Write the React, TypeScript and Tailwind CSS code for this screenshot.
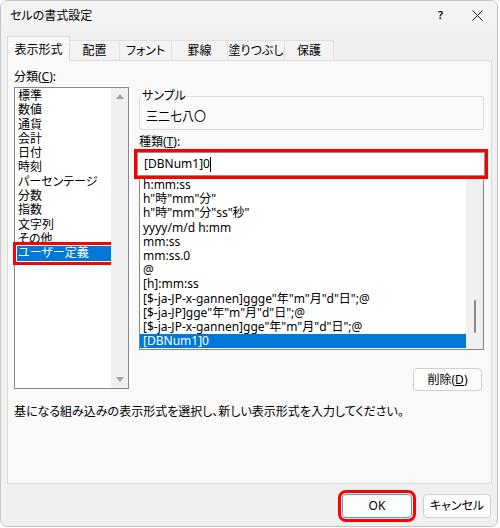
import React from 'react';

const categories = [
  '標準',
  '数値',
  '通貨',
  '会計',
  '日付',
  '時刻',
  'パーセンテージ',
  '分数',
  '指数',
  '文字列',
  'その他',
  'ユーザー定義',
];

const formats = [
  'h:mm:ss',
  'h"時"mm"分"',
  'h"時"mm"分"ss"秒"',
  'yyyy/m/d h:mm',
  'mm:ss',
  'mm:ss.0',
  '@',
  '[h]:mm:ss',
  '[$-ja-JP-x-gannen]ggge"年"m"月"d"日";@',
  '[$-ja-JP]gge"年"m"月"d"日";@',
  '[$-ja-JP-x-gannen]gge"年"m"月"d"日";@',
  '[DBNum1]0',
];

const tabs = [
  { label: '表示形式', w: 'w-[63px]', active: true },
  { label: '配置', w: 'w-[50px]' },
  { label: 'フォント', w: 'w-[52px]' },
  { label: '罫線', w: 'w-[56px]' },
  { label: '塗りつぶし', w: 'w-[57px]' },
  { label: '保護', w: 'w-[49px]' },
];

export default function App() {
  return (
    <div className="w-[500px] h-[528px] bg-white text-black text-[12px] font-['Noto_Sans','Noto_Sans_CJK_JP',sans-serif] [font-feature-settings:'palt']">
      <div className="w-[498px] h-[527px] bg-[#f0f0f0] border border-[#c4c4c4] rounded-[7px] flex flex-col overflow-hidden">
        {/* Title bar */}
        <div className="h-[29px] flex items-center bg-[#f3f3f3]">
          <span className="pl-[9px] leading-[14px]">セルの書式設定</span>
          <span className="ml-auto mr-[29px] font-semibold text-[11px]">?</span>
          <svg width="11" height="11" viewBox="0 0 11 11" className="mr-[14px]">
            <path d="M0.5 0.5L10.5 10.5M10.5 0.5L0.5 10.5" stroke="#1a1a1a" strokeWidth="1" />
          </svg>
        </div>

        {/* Tabs */}
        <div className="mt-[6px] ml-[6px] h-[24px] flex items-end">
          {tabs.map((t) =>
            t.active ? (
              <div
                key={t.label}
                className={`${t.w} h-[25px] -mb-px relative z-10 bg-[#f9f9f9] border-l border-t border-r border-[#dadada] flex items-center justify-center pt-[1px]`}
              >
                {t.label}
              </div>
            ) : (
              <div
                key={t.label}
                className={`${t.w} h-[20px] bg-[#f3f3f3] border-t border-r border-[#e0e0e0] flex items-center justify-center`}
              >
                {t.label}
              </div>
            )
          )}
        </div>

        {/* Panel */}
        <div className="ml-[6px] w-[485px] h-[424px] bg-[#f9f9f9] border border-[#dadada] flex flex-col">
          <div className="flex pt-[8px] pl-[6px]">
            {/* Category column */}
            <div className="w-[115px] flex flex-col">
              <div className="h-[15px] leading-[15px]">
                分類(<span className="underline">C</span>):
              </div>
              <div className="mt-[3px] h-[302px] bg-white border border-[#828790] flex">
                <div className="flex-1 flex flex-col pt-[1px]">
                  {categories.map((c) =>
                    c === 'ユーザー定義' ? (
                      <div
                        key={c}
                        className="h-[14.3px] leading-[14.3px] ml-[2px] pl-[1px] bg-[#0078d7] text-white outline-3 outline-[#ff0000] outline-offset-1"
                      >
                        {c}
                      </div>
                    ) : (
                      <div key={c} className="h-[14.3px] leading-[14.3px] pl-[3px]">
                        {c}
                      </div>
                    )
                  )}
                </div>
                <div className="w-[17px] bg-[#f0f0f0] flex flex-col items-center justify-between py-[6px]">
                  <svg width="8" height="5" viewBox="0 0 8 5">
                    <path d="M0 5L4 0L8 5Z" fill="#a3a3a3" />
                  </svg>
                  <svg width="8" height="5" viewBox="0 0 8 5">
                    <path d="M0 0L8 0L4 5Z" fill="#a3a3a3" />
                  </svg>
                </div>
              </div>
            </div>

            {/* Right column */}
            <div className="ml-[10px] w-[345px] flex flex-col">
              <fieldset className="mt-[20px] h-[41px] border border-[#dcdcdc] rounded-[2px]">
                <legend className="leading-[14px] px-[1px] ml-[1px]">サンプル</legend>
                <div className="pl-[6px] pt-[7px] leading-[14px]">三二七八〇</div>
              </fieldset>

              <div className="mt-[5px] h-[14px] leading-[14px]">
                種類(<span className="underline">T</span>):
              </div>

              <div className="mt-[3px] -ml-[2px] w-[348px] h-[24px] bg-white border border-[#8f8f8f] flex items-center pl-[6px] outline-3 outline-[#ff0000] relative z-10">
                <span className="leading-[14px]">[DBNum1]0</span>
                <span className="w-px h-[15px] bg-black" />
              </div>

              <div className="mt-px w-[345px] h-[173px] bg-white border border-[#828790] flex">
                <div className="flex-1 flex flex-col">
                  {formats.map((f) =>
                    f === '[DBNum1]0' ? (
                      <div key={f} className="h-[14.2px] leading-[14.2px] pl-[3px] bg-[#0078d7] text-white">
                        {f}
                      </div>
                    ) : (
                      <div key={f} className="h-[14.2px] leading-[14.2px] pl-[3px] whitespace-nowrap">
                        {f}
                      </div>
                    )
                  )}
                </div>
                <div className="w-[17px] bg-[#f0f0f0] flex flex-col items-center pt-[122px]">
                  <div className="w-[2px] h-[33px] bg-[#8a8a8a] rounded-full" />
                </div>
              </div>

              <div className="mt-[18px] flex justify-end pr-[2px]">
                <button className="w-[69px] h-[23px] rounded-[4px] bg-[#fdfdfd] border border-[#d0d0d0] leading-[14px]">
                  削除(<span className="underline">D</span>)
                </button>
              </div>
            </div>
          </div>

          <div className="mt-[14px] pl-[6px] leading-[14px]">
            基になる組み込みの表示形式を選択し、新しい表示形式を入力してください。
          </div>
        </div>

        {/* Buttons */}
        <div className="mt-[10px] flex justify-end gap-[11px] pr-[6px]">
          <button className="w-[70px] h-[24px] rounded-[4px] bg-[#fdfdfd] border border-[#4a9be0] outline-3 outline-[#ff0000] outline-offset-1">
            OK
          </button>
          <button className="w-[68px] h-[24px] rounded-[4px] bg-[#fdfdfd] border border-[#d0d0d0]">
            キャンセル
          </button>
        </div>
      </div>
    </div>
  );
}
